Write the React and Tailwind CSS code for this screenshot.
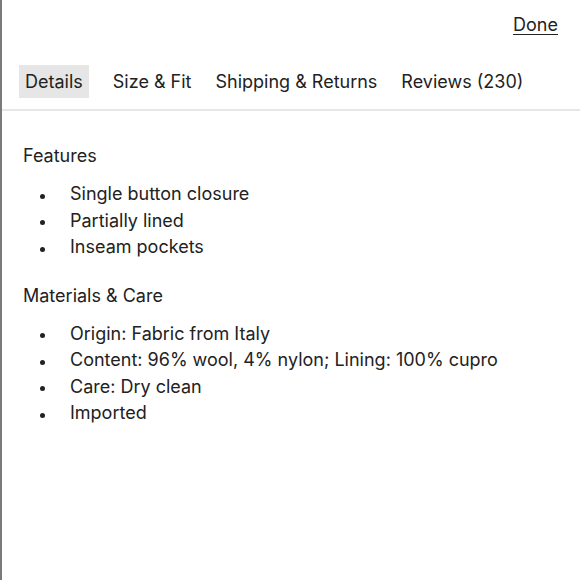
import React from 'react';

const tabs = ['Details', 'Size & Fit', 'Shipping & Returns', 'Reviews (230)'];

const sections = [
  {
    title: 'Features',
    items: ['Single button closure', 'Partially lined', 'Inseam pockets'],
  },
  {
    title: 'Materials & Care',
    items: [
      'Origin: Fabric from Italy',
      'Content: 96% wool, 4% nylon; Lining: 100% cupro',
      'Care: Dry clean',
      'Imported',
    ],
  },
];

const App = () => {
  return (
    <div
      className="w-[580px] h-[580px] bg-white border-l-2 border-[#7a7a7a] text-[#222] overflow-hidden"
      style={{ fontFamily: 'Inter, "Liberation Sans", sans-serif' }}
    >
      {/* Top bar */}
      <div className="flex justify-end items-start pt-[13px] pr-[22px] h-[65px]">
        <button className="text-[18px] leading-[24px] underline underline-offset-[3px]">Done</button>
      </div>

      {/* Tabs */}
      <div className="flex gap-[12px] pl-[17px] pb-[11px] border-b-2 border-[#e6e6e6]">
        {tabs.map((tab, i) => (
          <div
            key={tab}
            className={
              i === 0
                ? 'px-[6px] h-[33px] flex items-center text-[18px] bg-[#e6e6e6] mr-[6px]'
                : 'px-[6px] h-[33px] flex items-center text-[18px]'
            }
          >
            {tab}
          </div>
        ))}
      </div>

      {/* Content */}
      <div className="pl-[21px] pt-[32px]">
        {sections.map((section) => (
          <div key={section.title} className="mb-[22px]">
            <h3 className="text-[18px] leading-[26px]">{section.title}</h3>
            <ul className="mt-[12px]">
              {section.items.map((item) => (
                <li key={item} className="flex items-center text-[18px] leading-[26.5px]">
                  <span className="w-[47px] pl-[17px] flex items-center pt-[4px]">
                    <span className="w-[5px] h-[5px] rounded-full bg-[#222]" />
                  </span>
                  <span>{item}</span>
                </li>
              ))}
            </ul>
          </div>
        ))}
      </div>
    </div>
  );
};

export default App;
